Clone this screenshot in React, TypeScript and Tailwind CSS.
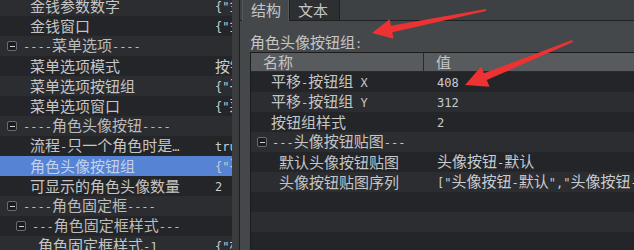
import React from 'react';

const CJK = /([\u2e80-\u9fff\uff00-\uffef]+)/;

// mixed text: CJK glyphs bigger than the mono latin
const Txt = ({ s }: { s: string }) => (
  <>
    {s.split(CJK).map((p, i) =>
      !p ? null : CJK.test(p) ? (
        <span key={i} className="text-[15px] font-['Noto_Sans_CJK_SC',sans-serif]">
          {p}
        </span>
      ) : (
        <span key={i} className="text-[12px] font-['DejaVu_Sans_Mono',monospace] whitespace-pre">
          {p}
        </span>
      )
    )}
  </>
);

const MinusBox = () => (
  <span className="w-[10px] h-[10px] border border-[#6a6d70] bg-[#1c1d1f] rounded-[2px] flex items-center justify-center shrink-0">
    <span className="w-[5px] h-px bg-[#d0d0d0]" />
  </span>
);

type Row = { label: string; value?: string; level: number; group?: boolean; selected?: boolean };

const leftRows: Row[] = [
  { label: '金钱参数数字', value: '{"金', level: 0 },
  { label: '金钱窗口', value: '{"金', level: 0 },
  { label: '----菜单选项----', level: 0, group: true },
  { label: '菜单选项模式', value: '按钮', level: 0 },
  { label: '菜单选项按钮组', value: '{"平', level: 0 },
  { label: '菜单选项窗口', value: '{"菜', level: 0 },
  { label: '----角色头像按钮----', level: 0, group: true },
  { label: '流程-只一个角色时是…', value: 'true', level: 0 },
  { label: '角色头像按钮组', value: '{"平', level: 0, selected: true },
  { label: '可显示的角色头像数量', value: '2', level: 0 },
  { label: '----角色固定框----', level: 0, group: true },
  { label: '---角色固定框样式---', level: 1, group: true },
  { label: '角色固定框样式-1', value: '{"框', level: 1 },
];

const tableRows: Row[] = [
  { label: '平移-按钮组 X', value: '408', level: 0 },
  { label: '平移-按钮组 Y', value: '312', level: 0 },
  { label: '按钮组样式', value: '2', level: 0 },
  { label: '---头像按钮贴图---', level: 0, group: true },
  { label: '默认头像按钮贴图', value: '头像按钮-默认', level: 1 },
  { label: '头像按钮贴图序列', value: '["头像按钮-默认","头像按钮-悬停"]', level: 1 },
  { label: '', level: 0 },
  { label: '', level: 0 },
  { label: '', level: 0 },
];

const LeftPanel = () => (
  <div className="w-[232px] shrink-0 overflow-hidden">
    <div className="-mt-1">
      {leftRows.map((r, i) => (
        <div
          key={i}
          className={
            'h-5 flex items-center whitespace-nowrap ' +
            (r.selected
              ? 'bg-[#5683d3] text-[#c3d2ea]'
              : i % 2 === 0
              ? 'bg-[#2b2d30] text-[#c6c6c6]'
              : 'bg-[#232528] text-[#c6c6c6]')
          }
        >
          {r.group ? (
            <div className={'flex items-center gap-[6px] ' + (r.level ? 'pl-4' : 'pl-[7px]')}>
              <MinusBox />
              <span className="leading-5 text-[#bcbcbc]">
                <Txt s={r.label} />
              </span>
            </div>
          ) : (
            <>
              <span className={'leading-5 shrink-0 ' + (r.level ? 'w-[215px] pl-[38px]' : 'w-[215px] pl-[30px]')}>
                <Txt s={r.label} />
              </span>
              <span className="leading-5 text-[#c8ccd2]">
                <Txt s={r.value ?? ''} />
              </span>
            </>
          )}
        </div>
      ))}
    </div>
  </div>
);

const Table = () => (
  <div className="border-l border-t border-[#1b1c1e] bg-[#232528]">
    <div className="h-[19px] flex items-center bg-[#585b5e] border-b border-[#2a2b2d] text-[#c6c6c6]">
      <div className="w-[173px] h-full shrink-0 pl-3 leading-[18px] border-r border-[#2a2b2d]">
        <Txt s="名称" />
      </div>
      <div className="pl-3 leading-[18px]">
        <Txt s="值" />
      </div>
    </div>
    {tableRows.map((r, i) => (
      <div
        key={i}
        className={
          'h-5 flex items-center whitespace-nowrap text-[#c6c6c6] ' + (i % 2 === 0 ? 'bg-[#232528]' : 'bg-[#2b2d30]')
        }
      >
        {r.group ? (
          <div className="flex items-center gap-[5px] pl-[6px]">
            <MinusBox />
            <span className="leading-5">
              <Txt s={r.label} />
            </span>
          </div>
        ) : (
          <>
            <span className={'w-[174px] shrink-0 leading-5 ' + (r.level ? 'pl-[28px]' : 'pl-[20px]')}>
              <Txt s={r.label} />
            </span>
            <span className="pl-3 leading-5 text-[#c8ccd2]">
              <Txt s={r.value ?? ''} />
            </span>
          </>
        )}
      </div>
    ))}
  </div>
);

const RightPanel = () => (
  <div className="flex-1 min-w-0 flex flex-col bg-[#45484b] overflow-hidden">
    <div className="h-[21px] flex shrink-0 bg-[#3e4144] text-[#c6c6c6]">
      <div className="w-[2px] border-b border-[#1e1f21]" />
      <div className="w-[47px] bg-[#45484b] border-x border-[#55585b] pl-[8px] leading-[19px]">
        <Txt s="结构" />
      </div>
      <div className="w-[51px] bg-[#2d2f31] border-x border-b border-[#1e1f21] pl-[8px] leading-[19px]">
        <Txt s="文本" />
      </div>
      <div className="flex-1 border-b border-[#1e1f21]" />
    </div>
    <div className="pl-[10px] pt-[11px] text-[#c6c6c6]">
      <div className="h-5 leading-5">
        <Txt s="角色头像按钮组:" />
      </div>
      <Table />
    </div>
  </div>
);

const Arrows = () => (
  <svg className="absolute inset-0 pointer-events-none" width={634} height={250} viewBox="0 0 634 250">
    <polygon
      fill="#ec3232"
      points="486,9 391,25.8 389.6,19.2 372,33 393.6,38.8 392.4,32.2 486,11"
    />
    <polygon
      fill="#ec3232"
      points="572,40 484,73.2 481.1,66.4 465,85 489.5,86.8 486.8,80 573,42"
    />
  </svg>
);

export default function App() {
  return (
    <div className="relative w-[634px] h-[250px] overflow-hidden flex bg-[#232528]">
      <LeftPanel />
      <div className="w-[8px] shrink-0 bg-[#3a3c3e] border-r border-[#1e1f21]" />
      <RightPanel />
      <Arrows />
    </div>
  );
}
